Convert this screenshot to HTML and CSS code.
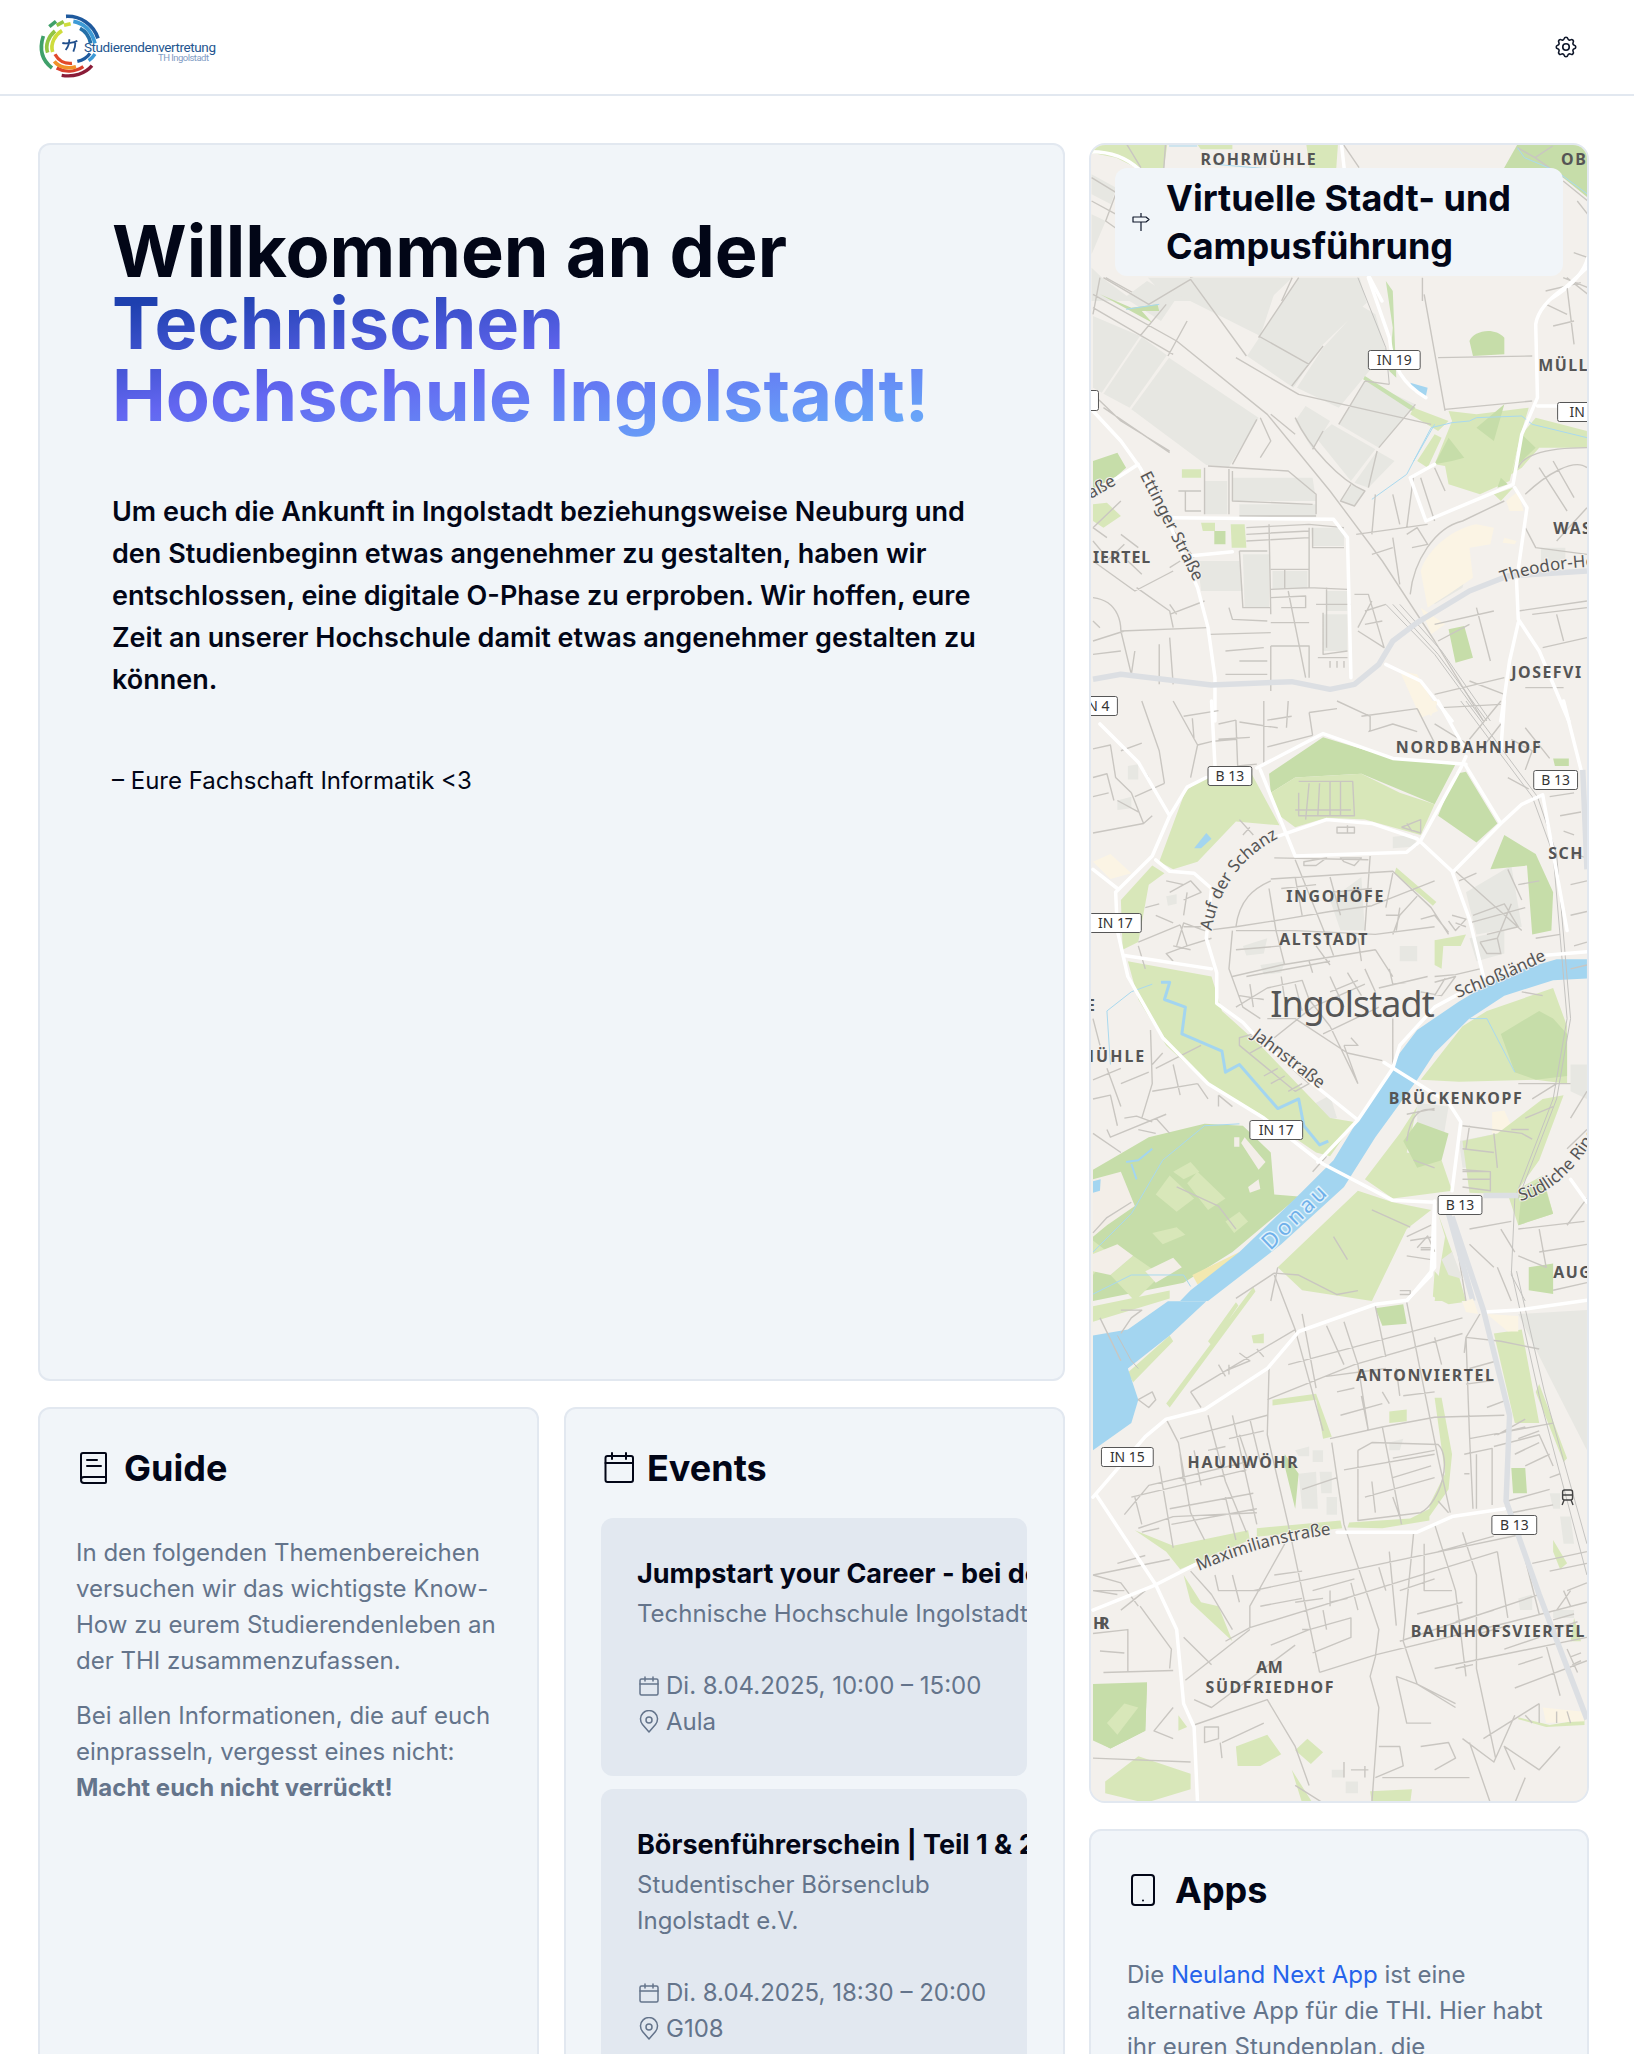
FILE: index.html
```html
<!DOCTYPE html>
<html lang="de">
<head>
<meta charset="utf-8">
<title>O-Phase THI</title>
<link rel="stylesheet" href="styles.css">
</head>
<body>
<header class="topbar">
  <svg class="logo" viewBox="0 0 300 94" role="img" aria-label="Studierendenvertretung TH Ingolstadt">
    <g transform="scale(.3333)" fill="none" stroke-linecap="butt">
      <path d="M198 49C240 47 280 72 294 115" stroke="#1f5a9e" stroke-width="11"/>
      <path d="M220 64C252 70 275 90 285 130" stroke="#3d9ad6" stroke-width="11"/>
      <path d="M240 85C258 94 268 110 272 130" stroke="#2470a8" stroke-width="11"/>
      <path d="M232 184C250 180 262 172 270 160" stroke="#1f5a9e" stroke-width="10"/>
      <path d="M266 182C274 176 280 170 285 162" stroke="#3d9ad6" stroke-width="10"/>
      <path d="M185 226C220 232 255 222 276 197" stroke="#8a1c38" stroke-width="10"/>
      <path d="M170 204C195 218 225 216 250 200" stroke="#d9402e" stroke-width="10"/>
      <path d="M163 184C178 203 205 207 228 200" stroke="#f0922a" stroke-width="11"/>
      <path d="M165 163C175 182 195 192 216 190" stroke="#e24a2a" stroke-width="10"/>
      <path d="M156 204C125 180 118 145 130 108" stroke="#3fa06a" stroke-width="11"/>
      <path d="M143 158C135 135 145 110 165 93" stroke="#93c544" stroke-width="11"/>
      <path d="M158 156C150 130 165 105 186 92" stroke="#cfdc3c" stroke-width="11"/>
      <path d="M148 80L168 64" stroke="#3fa06a" stroke-width="11"/>
      <path d="M170 76L191 65" stroke="#93c544" stroke-width="11"/>
      <path d="M192 76L212 71" stroke="#cfdc3c" stroke-width="11"/>
      <path d="M187 129C200 132 222 128 232 122M208 118C208 132 204 142 197 150M226 128C226 138 224 146 220 155" stroke="#1f4e8c" stroke-width="5.500"/>
    </g>
    <text class="logo-name" x="84" y="52" textLength="132">Studierendenvertretung</text>
    <text class="logo-sub" x="158" y="61" textLength="51">TH Ingolstadt</text>
  </svg>
  <svg class="gear" viewBox="0 0 24 24" fill="none" stroke="currentColor" stroke-width="1.5" stroke-linecap="round" stroke-linejoin="round">
    <path d="M10.325 4.317c.426 -1.756 2.924 -1.756 3.35 0a1.724 1.724 0 0 0 2.573 1.066c1.543 -.94 3.31 .826 2.37 2.37a1.724 1.724 0 0 0 1.065 2.572c1.756 .426 1.756 2.924 0 3.35a1.724 1.724 0 0 0 -1.066 2.573c.94 1.543 -.826 3.31 -2.37 2.37a1.724 1.724 0 0 0 -2.572 1.065c-.426 1.756 -2.924 1.756 -3.35 0a1.724 1.724 0 0 0 -2.573 -1.066c-1.543 .94 -3.31 -.826 -2.37 -2.37a1.724 1.724 0 0 0 -1.065 -2.572c-1.756 -.426 -1.756 -2.924 0 -3.35a1.724 1.724 0 0 0 1.066 -2.573c-.94 -1.543 .826 -3.31 2.37 -2.37c1 .608 2.296 .07 2.572 -1.065z"/>
    <circle cx="12" cy="12" r="3"/>
  </svg>
</header>

<main class="page">
  <div class="left-col">
    <section class="card hero">
      <h1 class="hero-title">Willkommen an der<br><span class="gradient">Technischen<br>Hochschule Ingolstadt!</span></h1>
      <p class="hero-text">Um euch die Ankunft in Ingolstadt beziehungsweise Neuburg und den Studienbeginn etwas angenehmer zu gestalten, haben wir entschlossen, eine digitale O-Phase zu erproben. Wir hoffen, eure Zeit an unserer Hochschule damit etwas angenehmer gestalten zu können.</p>
      <p class="hero-sign">– Eure Fachschaft Informatik &lt;3</p>
    </section>
    <div class="two-col">
      <section class="card panel">
        <h2 class="panel-title">
          <svg class="h-icon" viewBox="0 0 32 32" fill="none" stroke="currentColor" stroke-width="2" stroke-linecap="round" stroke-linejoin="round"><path d="M5 27V3a2 2 0 0 1 2-2h22a1 1 0 0 1 1 1v28a1 1 0 0 1-1 1H8a3 3 0 0 1-3-3 3 3 0 0 1 3-3h22"/><path d="M11 8h10M11 14h14"/></svg>
          Guide
        </h2>
        <p class="copy">In den folgenden Themenbereichen versuchen wir das wichtigste Know-How zu eurem Studierendenleben an der THI zusammenzufassen.</p>
        <p class="copy">Bei allen Informationen, die auf euch einprasseln, vergesst eines nicht: <strong>Macht euch nicht verrückt!</strong></p>
      </section>
      <section class="card panel">
        <h2 class="panel-title panel-title-tight">
          <svg class="h-icon" viewBox="0 0 32 32" fill="none" stroke="currentColor" stroke-width="2" stroke-linecap="round" stroke-linejoin="round"><rect x="3.500" y="4" width="27.500" height="26" rx="2"/><path d="M3.500 11h27.500M10 1v6M24 1v6"/></svg>
          Events
        </h2>
        <div class="events">
          <article class="event">
            <h3 class="event-title">Jumpstart your Career - bei der THI Karrieremesse</h3>
            <p class="event-org">Technische Hochschule Ingolstadt</p>
            <p class="event-meta"><svg class="m-icon" viewBox="0 0 24 24" fill="none" stroke="currentColor" stroke-width="1.5" stroke-linecap="round" stroke-linejoin="round"><rect x="3" y="5" width="18" height="16" rx="1.500"/><path d="M3 10h18M8 3v4M16 3v4"/></svg>Di. 8.04.2025, 10:00 – 15:00</p>
            <p class="event-meta"><svg class="m-icon" viewBox="0 0 24 24" fill="none" stroke="currentColor" stroke-width="1.5" stroke-linecap="round" stroke-linejoin="round"><path d="M12 22l-6.500-7.500A8.500 8.500 0 1 1 18.500 14.500z"/><circle cx="12" cy="10" r="3"/></svg>Aula</p>
          </article>
          <article class="event">
            <h3 class="event-title">Börsenführerschein | Teil 1 &amp; 2</h3>
            <p class="event-org">Studentischer Börsenclub Ingolstadt e.V.</p>
            <p class="event-meta"><svg class="m-icon" viewBox="0 0 24 24" fill="none" stroke="currentColor" stroke-width="1.5" stroke-linecap="round" stroke-linejoin="round"><rect x="3" y="5" width="18" height="16" rx="1.500"/><path d="M3 10h18M8 3v4M16 3v4"/></svg>Di. 8.04.2025, 18:30 – 20:00</p>
            <p class="event-meta"><svg class="m-icon" viewBox="0 0 24 24" fill="none" stroke="currentColor" stroke-width="1.5" stroke-linecap="round" stroke-linejoin="round"><path d="M12 22l-6.500-7.500A8.500 8.500 0 1 1 18.500 14.500z"/><circle cx="12" cy="10" r="3"/></svg>G108</p>
          </article>
        </div>
      </section>
    </div>
  </div>

  <div class="right-col">
    <section class="map-card">
      <svg class="map" viewBox="1090 144 498 1656" preserveAspectRatio="none">
        <rect class="land" x="1080" y="130" width="520" height="1690"/>

        <!-- top strip -->
        <g transform="translate(1080,0) scale(.35336,.33333)">
          <path class="g1" d="M30 430H245L235 505H165L100 470L30 455Z"/>
          <path class="g1" d="M640 430H730L725 505H650Z"/>
          <path class="g2" d="M1200 505L1240 430H1440V590L1370 530L1290 505Z"/>
          <path class="g1" d="M330 430H430V445H340Z"/>
          <path class="ind" d="M30 520L100 560L85 610L30 580ZM30 640L70 660L30 760ZM60 830L150 900H30L30 800ZM190 830H600L530 900H250Z"/>
          <path class="minor" d="M130 430L170 500M240 430L235 505M30 530L100 575M30 600L100 640M100 575L70 660L150 720M70 830L190 900M310 830L530 900M600 830L570 900M970 830V900M1380 830L1440 880M1400 755L1440 770M1370 830L1440 860M1240 440L1290 470L1340 435M1370 540L1440 600M1290 470L1370 530M1320 870L1420 845M745 430L790 500M1410 600L1440 640"/>
          <path class="road" d="M30 452C80 452 130 470 165 505M740 430L748 505M820 830L855 900M1340 890C1400 850 1430 810 1440 770"/>
          <path class="brook" d="M250 435L330 435M380 490L550 505M1240 440L1260 470L1350 510L1440 580"/>
        </g>

        <!-- north -->
        <g transform="translate(1085,260) scale(.35,.33333)">
          <path class="ind" d="M20 165L155 225L45 395L20 380ZM160 228L232 283L125 440L50 398ZM238 290L495 470L410 618L345 612L130 445ZM270 105L295 50H555L500 225ZM462 285L610 50H785L805 125L675 255L595 380ZM680 260L790 135L830 160L860 270L725 440L605 380ZM800 360L945 430L840 560L725 490ZM630 435L700 480L650 565L600 480ZM705 490L830 565L760 660L660 530ZM835 570L885 600L810 680L770 665ZM730 720L765 670L800 690L770 735ZM175 60L260 110L215 180L110 110ZM420 650H650L660 720H420ZM440 730H660V765H440ZM340 660H405V760H340ZM320 900H440L450 990H330ZM450 880H525V1040H455ZM535 930H635V985H535ZM645 800H740V855H650ZM690 990H750V1050H690ZM680 1060H750V1170H680ZM1305 860H1375V905H1305ZM980 950L1060 850L1100 880L1080 980L1000 1030Z"/>
          <path class="yel" d="M960 930C980 860 1060 800 1120 790L1170 800L1160 850L1100 860L1110 950L1040 1000L980 1040ZM1205 720L1240 690L1255 750L1215 750ZM1200 830L1235 840L1230 850L1195 845ZM960 1040L1030 1090L990 1120ZM900 1230L950 1240L1010 1350L960 1370Z"/>
          <path class="g2" d="M1100 240C1110 210 1170 195 1200 230L1200 280L1110 285ZM20 600L90 575L115 620L40 690L20 680ZM368 810H400V850H368ZM1040 1105L1085 1095L1110 1190L1060 1205ZM40 100L130 140L205 130L210 150L160 150L190 185Z"/>
          <path class="g1" d="M1000 610L1050 480L1040 450L1120 460L1270 440L1250 510L1215 660L1130 700L1040 670L1030 615ZM940 440L1040 480L1010 510L930 460ZM950 600L1000 520L1020 530L980 620ZM1290 470L1437 510V560L1300 560L1250 620L1220 640L1250 520ZM20 730L60 725L100 765L50 800L20 780ZM275 625H330V650H275ZM415 790H455L460 860H418ZM330 785H370V810H335ZM1170 700L1225 680L1190 720Z"/>
          <path class="g2" d="M1000 610L1040 530L1085 590L1050 600ZM1120 500L1200 430L1170 540ZM1250 520L1290 560L1240 610ZM1190 650L1210 670L1180 680Z"/>
          <path class="g3" d="M800 345L945 440L935 450L795 355ZM870 330L890 350L880 90L860 60L880 200Z"/>
          <path class="water" d="M930 365L980 380L975 405L940 390Z"/>
          <path class="brook" d="M115 145L210 130M820 715L920 640L990 500L1050 485L1100 480L1120 470L1250 465L1280 490L1437 530M1000 490L940 600"/>
          <path class="minor" d="M20 100L260 240L520 460L700 690L850 900L1000 1140L1140 1380M20 140L250 280M50 440L240 575M430 290L610 400L990 490M20 400L100 480L240 570M490 475L420 610M500 470L530 540L500 590M530 460L600 520M350 615L580 630L660 700L660 760M420 630V720L650 730M440 765H660M640 790L740 800M650 800V860H740M460 800L640 790M460 820L640 810M460 840L640 830M525 790L530 1060M640 800V980L750 985M440 870H520M440 870L450 1040H530M530 925H640V980L530 985M570 925V985M530 1010L630 1005V1040H560M690 980V1160M680 1055V1180L750 1170M665 1190H750M770 1000H810L855 1160L780 1110M410 1040L420 1075L520 1080M530 1085H640M355 1120L530 1115M530 1155H640V1250M530 1155V1290M100 1110L350 1100M20 1140L110 1110M100 1110L130 1240M20 1010C100 1020 100 1100 100 1110M140 990L250 930M20 900L140 990M340 620V760M410 620V760M265 690H330M285 690V750H330M100 820L150 860M20 800L60 830M215 760L310 890M240 1060L340 1020M240 1030L260 1060M145 980L240 1050L250 1100M1010 290L1280 285M970 100L1030 450M1030 445L1280 420M775 820L980 790M830 700L820 820M880 700L900 790M940 640L920 800M960 650L1000 780M1000 620L1030 690M880 830L900 970M820 880L880 860M920 820L950 800L980 850L935 860M930 1000C940 900 1000 800 1080 780L1200 720M1240 620C1250 590 1300 560 1437 560M1260 700C1320 640 1400 590 1437 620M1300 620L1380 750M1340 600L1400 710M1437 740L1350 840M1260 800L1290 860L1437 880M1320 130L1380 160M1340 195L1400 180M1380 80L1400 250M1000 1090L1170 1050M1120 1040L1160 1200M1010 1140L1100 1090M1240 1050L1437 1020M1280 1060L1437 1040M1000 1300L1200 1250M1100 1260L1200 1300M1350 1060L1370 1140M1310 1160L1437 1130M1020 1340L1190 1330M1260 1280L1370 1280M50 50L180 130L300 55M300 55L460 285M40 50L20 160M155 225L230 130M235 285L290 180M610 50L495 230M495 225L640 310M680 255L590 375M870 370L800 360M800 360L725 490M945 430L840 560M835 570L810 680M600 470C640 560 730 660 800 690L770 735L730 720L760 670M650 565L680 510M580 990L630 1250M100 720L20 800M820 1020L780 1100M130 1240L140 1170M20 1180L100 1170M210 1150L210 1270M240 1130L250 1270M400 1170L510 1160M400 1240H520M440 1200L520 1200M660 1030H760M700 1200V1220M720 1200V1220M740 1200V1220M800 1050L860 1030M800 1090L850 1080M60 900L110 850M20 840L60 890M120 900L160 940M40 1100L20 1080M240 920L270 900"/>
          <path class="rail" d="M780 50L860 260L870 370M860 1030L1000 1180L1140 1380M880 1030L1010 1180L1150 1380M900 1030L1020 1170L1160 1380"/>
          <path class="road" d="M810 50L870 230C880 320 910 370 975 410M1437 20L1380 75C1330 110 1295 150 1290 190L1295 410L1250 520L1225 670M1295 435H1350M1225 670L975 780L930 650L1000 610M20 450L100 540L155 620L240 790L320 980L350 1100L370 1250V1380M20 690L90 650L150 610M240 770L710 775L750 830L760 1250M295 885L420 872M1230 680L1265 740L1235 960L1240 1075L1300 1170L1385 1380M1240 1085L1215 1200L1190 1380M860 1210L960 1260L1050 1380"/>
          <path class="motor" d="M20 1255L100 1240L360 1272L590 1262L700 1285L770 1270L840 1210L880 1140L950 1085L1100 990L1210 945L1437 930"/>
        </g>

        <!-- centre -->
        <g transform="translate(1085,700) scale(.35,.38265)">
          <path class="ind" d="M90 260L130 250L130 280L90 285ZM120 170L150 165L150 205L120 205ZM230 510L260 505L260 530L235 535ZM880 355L940 350L950 380L880 385ZM450 640L520 620L510 660L460 665ZM900 640L950 640L950 680L900 680ZM700 520L790 460L800 600L730 600ZM1090 500L1220 430L1250 590L1120 610ZM1100 620L1200 600L1200 660L1120 680ZM500 690L570 680L560 710L510 715ZM640 1060L700 1030L720 1090L660 1100ZM950 1050L1040 1060L1020 1170L950 1180ZM1070 1150L1180 1130L1170 1220L1080 1220ZM1390 950H1437V1040L1390 1020Z"/>
          <path class="yel" d="M20 420L70 400L130 450L70 465ZM950 0L1010 0L990 40ZM1165 1075L1200 1070L1230 1130L1165 1130Z"/>
          <path class="g2" d="M525 190L680 95L880 150L1060 165L1000 270L790 190L600 200L530 240ZM1060 190L1090 185L1180 320L1120 370L1010 300ZM1200 350L1290 400L1340 500L1335 600L1280 610L1265 430L1160 440ZM1340 150H1385V170H1345Z"/>
          <path class="g1" d="M530 240L600 200L790 190L900 240L1000 270L960 350L800 310L690 305L600 330L555 300ZM210 420L285 235L340 200L475 190L555 325L430 315L320 420L250 440ZM100 520L190 430L225 450L180 480L150 630L105 650ZM890 435L1005 525L995 535L885 450ZM1000 625L1090 610L1075 640L1025 640L1020 700L1000 690ZM120 680L360 720L390 810L500 900L700 1090L770 1100L700 1190L660 1180L500 1080L350 1000L230 900L150 780ZM1150 810L1340 750L1380 850L1380 1000L1290 990L1070 995L960 990L1080 850ZM1180 1130L1310 1040L1370 1030L1300 1200L1230 1290L1100 1285L1080 1150ZM550 1480L780 1280L880 1310L990 1330L920 1380L820 1568L620 1540ZM900 1130L950 1060L920 1180L1020 1200L1050 1280L880 1300L800 1250ZM1010 1340L1030 1400L1000 1568L1090 1568L1050 1440ZM1210 1290L1310 1240L1340 1340L1240 1370Z"/>
          <path class="g2" d="M1190 870L1300 810L1340 830L1380 870L1380 980L1290 990L1230 970ZM910 1150L950 1100L1040 1130L1020 1200L950 1220ZM1250 1280L1310 1250L1340 1340L1240 1370ZM1270 1480L1340 1470L1340 1550L1270 1540ZM20 1225L180 1140L340 1105L450 1110L530 1180L540 1290L610 1295L420 1440L280 1520L20 1568Z"/>
          <path class="g1" d="M200 1290L240 1240L310 1300L260 1335ZM290 1260L320 1230L400 1300L350 1330ZM190 1390L260 1375L285 1395L220 1420ZM400 1360L440 1335L465 1360L425 1390ZM250 1230L300 1205L325 1230L280 1250ZM70 1500L135 1450L215 1500L140 1568ZM20 1410L70 1445L20 1500Z"/>
          <path class="plain" d="M20 1250L100 1230L140 1320L60 1370L20 1400ZM445 1155L455 1140L515 1205L495 1225ZM425 1140H440V1165H425ZM465 1270L495 1250L500 1275L470 1285ZM20 1445L90 1420L135 1450L70 1500L20 1490ZM170 1490L250 1455L275 1480L200 1520Z"/>
          <path class="sand" d="M305 1500L440 1440L445 1450L400 1480L320 1525Z"/>
          <path class="water" d="M1437 675L1350 675L1200 715L1070 785L950 860L900 920L870 975L810 1050L710 1200L600 1300L440 1440L300 1540L270 1568H350L560 1420L740 1270L830 1140L950 990L1000 920L1100 830L1200 770L1340 730L1437 725Z"/>
          <path class="canal" d="M215 735H240L225 780L285 800L275 870L390 915L400 970L440 950L550 1065L610 1040L625 1110L670 1160L695 1150"/>
          <path class="canal thin" d="M115 1205L150 1200L190 1170M130 1210L145 1250"/>
          <path class="water" d="M310 385L345 345L360 360L330 385ZM20 1255L42 1250L40 1280L20 1285Z"/>
          <path class="brook" d="M190 740L130 760L60 810L70 950M1100 830L1150 830L1230 970M20 1440L130 1340L220 1200L340 1110L440 1105M20 1550L130 1500L280 1500L300 1530"/>
          <path class="minor" d="M20 125L70 115L85 200M20 345L165 320L130 240M165 320L190 300M160 0L210 130L225 215M250 0L320 115L365 105M280 40L380 25M310 100L305 45M430 50L435 170M510 0V165M380 100L470 95M440 55L550 70M580 0L575 70M520 120L650 90M720 0L815 40V80M790 40L950 20M640 30L720 20M1190 0L1100 100M430 590L570 570L700 550L820 535L1000 470M430 600H600L830 610L1000 590M340 600L430 590M420 720L560 690L830 650M460 720L700 680M525 490L545 600L570 690M600 415L700 640L710 665M815 405L800 600M530 465L880 445L990 540L1040 610M430 590C440 520 480 490 530 470M960 570L1000 560L1040 605M900 540L890 600M540 410L810 415M420 600L410 700L450 800L500 830M430 800L520 750L620 730L640 780L700 850L780 1000M520 830H600L750 920L850 940M540 880L650 800L800 740M680 870L840 800M870 700L880 740L920 735M840 750L980 720M1000 720L1060 715L1130 700M880 830V950M740 900L780 1000M760 880L780 900L740 900M1060 445L1250 600M1070 470L1120 450M1100 580L1260 540M1130 630L1180 620L1220 530M1180 620L1190 660H1150L1130 630M1390 560L1437 550M150 630L270 585M270 585L290 640M240 500L300 470L330 500L280 520M360 620L290 640L230 660L250 680M20 1040L70 1030L90 1110M185 860L190 1000L160 1090M200 960L330 900M190 1020L320 1000M60 1120L70 1140L230 1080M110 1090L145 1085L190 1100M20 1130L100 1180M920 1080L1000 1065M920 1150C930 1080 960 1060 1000 1070M1080 1110L1250 1130L1280 1145M940 1200L1000 1220M1080 1270L1160 1280V1230L1080 1225M920 1400L990 1370M20 1390L60 1350L130 1310M1100 1380L1220 1360M1240 1380L1430 1360M1300 1380L1320 1480L1240 1450M1060 1400L1090 1568M1240 1000L1390 1000M1380 1370L1437 1300M1180 1480L1220 1568M530 1568L550 1480M820 1330L930 1375M430 1380L380 1320L260 1270M710 1400L750 1460M380 1030V1060M650 1230L690 1190M260 640L280 580L340 600M610 240V300H770L765 210H610M640 215L630 310M670 215L665 300M700 210V300M730 210V300M600 285H760M720 330H770V345H720ZM750 325V345M905 330L960 310V345L905 330M920 320L935 340M440 310L480 350M470 330L450 350M440 880L480 870L640 1000L600 1020L440 900ZM470 880L500 860M510 900L470 920M550 960L510 980M570 980L530 1000M620 1000L580 1020M625 420L690 410L660 430H625ZM730 410H790L770 430L740 420ZM1000 735L1060 720L1020 770L960 760M1030 725L1000 770M1110 560L1200 530L1240 590L1150 610M1050 560L1090 570L1060 600L1040 575M1060 580L1090 590M1080 1230H1160M1080 1250H1160M20 200L60 190L80 260M20 250L65 240M85 200L130 240M100 130L160 110M150 160L180 200M225 215L140 250M90 260L150 290M320 115L300 200M365 105L430 100M435 170L490 165M380 60L430 50M520 50L590 40M650 90L640 30M810 80L880 60L950 80M950 20L1000 110M1000 60L1090 110M1130 130L1190 60M1220 100L1280 130L1260 180M1260 70L1330 150M1210 200L1270 230M1330 250L1400 240M1360 300L1420 290M1370 340L1400 350M1400 400L1437 410M1390 480L1437 470M600 460L620 560M700 460L730 560M880 450L860 540M560 490L660 480M700 500L820 490M950 510L900 560M860 560H900L880 610M430 650L560 640M660 640L700 690M780 620L790 680M830 650L880 720M640 680L650 710M560 720L570 780M600 740L620 810M470 740L480 800M440 770L510 780M700 720L740 800M750 710L790 770M800 700L830 760M700 760L780 730M150 640L170 700M200 560L250 580M170 540L210 530M280 590H330M250 640L300 650M230 470L280 480M290 500L280 560M20 830L40 900M20 990L100 960M60 960L100 1060M100 1000L180 970M220 920L190 950M250 950L270 1030M320 1000L350 1040M150 1120L200 1130M200 1090L240 1130M380 1030L420 1060M1250 760L1310 770M1400 640L1437 630M1390 700L1437 690M1240 480L1300 470M1210 440L1250 520M1290 620L1360 610M1100 1110L1090 1170M1080 1170L1170 1180M1170 1130L1180 1220M1220 1120H1270M1260 1090L1340 1060M1280 1040L1350 1000M1390 1090L1437 1020M1380 1170L1437 1120M930 1410L1000 1400M920 1450L990 1460M1100 1420L1170 1480M1190 1380L1230 1440M1300 1440L1437 1420M1340 1540L1437 1520"/>
          <path class="rail" d="M1075 0L1280 250L1340 400L1380 830L1340 1040L1230 1300L1220 1500L1260 1568M1090 0L1295 250L1350 400L1390 830L1350 1040L1240 1300"/>
          <path class="road" d="M85 500L190 405L240 300L290 225L345 200M490 175L680 85L880 150L1090 165M500 180L600 405L920 395L960 365L1075 175L1090 145M545 355L690 310L820 320L950 360L1050 445L1100 570L1140 720M1090 170L1190 320L1055 445M1190 320L1250 270L1310 245L1380 600M85 500L90 600L120 720L220 880L350 1000L510 1090L680 1210L880 1305L1000 1310M200 415L240 445L310 450L360 490L345 620L375 710V790L450 840L500 890L780 1095L665 1205M110 665L360 700M855 945L1040 1050L1075 1100L1050 1280M780 1095L880 960L900 900L1000 800L1100 750L1310 665L1437 655M1000 1320V1480L920 1568M360 0L370 170M1010 0L1090 130M20 440L90 490M40 60L150 160L240 300M1200 0L1190 130M1370 0L1420 180M1390 1250L1437 1310"/>
          <path class="motor" d="M1425 180L1437 440M1040 1340L1110 1568M1140 1292H1240"/>
        </g>

        <!-- south -->
        <g transform="translate(1085,1200) scale(.35,.38961)">
          <path class="ind" d="M1240 290L1437 280V640L1340 470ZM600 640L640 630V655H610ZM650 640H680V670H650ZM610 700L660 695L665 790L620 790ZM670 695H705V750H675ZM690 760H720V805H690ZM870 620L910 610L900 640H870ZM1330 750H1360V790H1340ZM1360 810H1390L1400 880H1370ZM1240 1020L1280 1010V1050H1245ZM1340 1050H1400V1070H1340ZM705 1460H740V1480H705ZM745 1490H780V1520H745ZM1020 150L1050 130L1080 200L1040 190Z"/>
          <path class="g2" d="M830 275L910 265L920 315L850 320ZM20 1240L175 1235L170 1360L70 1405L20 1380ZM570 650L610 700L600 790L570 680ZM1220 685H1260L1265 750H1225Z"/>
          <path class="g1" d="M1170 340L1250 330L1300 570H1230ZM535 510L660 495L705 605L680 610L660 510L535 525ZM870 540L920 535V565L870 570ZM1000 505H1020L1050 650L1040 740L985 810V780L1030 700ZM755 825L930 815L985 790V820L850 840L750 838ZM490 840L730 820L735 840L490 862ZM140 845L250 885L465 845L470 870L270 945L230 900ZM280 960L330 1030L380 1040L420 1130L300 1030ZM430 1400L520 1370L560 1420L500 1450H435ZM600 1410L635 1380L680 1415L645 1445ZM55 1490L150 1425L300 1470V1510L170 1545L55 1520ZM815 1515L935 1510L930 1545H820ZM1000 180L1080 260L1040 265L995 245ZM1340 870L1380 930L1360 945L1340 900ZM475 345L510 340V365H480ZM265 1320L290 1350L265 1360ZM1240 1325L1330 1345L1430 1330V1345L1320 1350L1240 1330ZM350 360L430 260L437 268L360 370ZM230 520L480 220L486 232L240 530ZM120 440L240 345L250 360L135 465ZM20 270L240 230V250L20 310ZM1300 470L1380 660L1370 670L1290 490ZM1400 1070L1420 1130H1390ZM590 1460L650 1545H620Z"/>
          <path class="g2" d="M20 1245L175 1240L170 1360L70 1405L20 1385Z"/>
          <path class="g1" d="M60 1340L110 1290L150 1300L90 1370Z"/>
          <path class="yel" d="M1080 260L1110 250L1125 290L1090 285ZM1150 290L1240 295V335H1210ZM1310 1300L1420 1310L1430 1335L1320 1340Z"/>
          <path class="water" d="M235 257L120 330L20 345V640L130 570L150 510L120 430L240 345L345 257Z"/>
          <path class="minor" d="M300 490L430 420L600 330M380 420L400 450M300 490L330 530M540 190L600 330L680 590M620 290L660 480M690 320L740 420M740 310L780 420L810 590M830 270L860 400M920 260L960 440L1010 660L1045 800M1130 290L1090 350L1100 600L1110 790M525 430L520 600L580 830L620 1000L670 1210M580 420L790 370L1080 300M520 510L770 420L1080 340M690 450L860 430M720 490L770 480M350 550L400 720L460 850M420 550L490 830M230 560L265 620L300 800L340 870M210 680L250 890M110 805L180 730L460 670M270 610L520 550M130 760L460 690M240 790L480 750M245 830L490 790M150 840L250 810L490 800M400 760L430 870M700 610L850 580L1000 555L1200 550M850 580L905 830M780 640L820 620L1010 625C1050 660 1020 770 960 800L780 820V640M740 690L1000 650M800 760L1000 710M705 620L740 830L840 1100L830 1170M1100 610L1340 570M1000 830L1060 1000L1090 1220M1080 850L1120 960V1200L1175 1430M940 850L910 1130L950 1240L1060 1290M970 880V1000H1050M480 1000L1280 850M470 1095L1180 900M400 1130L470 1095V1040L520 960L570 880M370 960L380 1000H500M280 1120L360 1190M285 1230L470 1100M640 1100L760 1070V1120L650 1160M670 1210L830 1165L1220 1080L1437 1030M900 1130L1300 1010M1000 1200L1437 1120M1230 1250L1437 1180M20 1110L120 1100V1210M40 1155L110 1160M50 1210L250 1205M155 1040L245 1150L240 1200M20 960L100 980L150 1040M90 930L170 910M250 1300L195 1360L250 1380M310 1280L360 1300L600 1140M310 1345L520 1280L600 1400L640 1500M390 1390L510 1340M830 1170L815 1220L840 1300L820 1545M890 1220L920 1340H990M890 1220L950 1240L1060 1300M960 1400L1040 1390L1060 1430L1000 1460M1080 1380L1170 1440L1230 1320M1140 1380L1300 1290M1100 1390L1160 1545M1230 1460L1200 1400L1300 1460L1360 1400M1260 1480L1230 1545M20 1430L300 1440M840 1400H900L910 1450L830 1480M850 1480H1100M1085 650L1165 635V780M1085 700H1100M1120 650V790M650 1000L770 970M600 1030L680 1020M700 1030L750 1020M620 1100H640M700 1000V1040M760 1460H810M740 1440V1480M800 1450V1480M340 1350V1390L380 1380V1350ZM390 1430L385 1390M1350 1050L1390 1000M1370 1000L1390 1040M1340 1075L1400 1060M1340 1100L1410 1080M1380 1150L1410 1210M1390 1170L1420 1160M1395 1190L1420 1180M1260 1320L1280 1340M1300 1290V1340M1350 1310V1340M1380 1310L1390 1340M600 1500L680 1545M240 920L20 960M620 740L720 710M1010 770L1040 800M1170 630L1300 600L1340 680M1170 600L1260 580M1230 650L1300 620M1210 770L1330 740M1300 380L1190 360L1090 350L1085 390M440 390L470 410L390 440M410 420V445M490 380L510 400M150 510L180 530L200 510L190 490ZM40 300L100 410M100 280H160L130 300L100 340M950 120L980 90L1000 130M780 230L720 240L610 190L540 185L430 250M900 240H930V230H900M960 120H990V125H960M20 1000H110M20 1000L90 1010M100 1050L170 1000M160 850L210 840M270 650L280 720M310 640L330 730M350 640L400 630M440 600L470 680M470 560L500 670M410 610L510 590M140 760L160 830M300 950L360 1010M360 1010L420 1100M420 960L440 1030M540 960L620 950M500 1040L620 1020M530 1140L640 1100M680 1050L690 1100M760 980L780 1050M870 900L890 1090M900 1000L1000 970M860 1000L840 940M1010 900L1170 860M1060 1080L1170 1050M1130 1110L1210 1090M1180 900L1210 1070M1240 850L1300 1060M1280 930L1437 900M1330 950L1437 930M1380 1000L1437 980M1200 1150L1300 1120M1240 1190L1310 1170M1320 1140L1360 1270M1060 1200L1110 1190M950 1060L1080 1030M1180 600L1260 560M1100 430L1180 410M1000 350L1020 420M1090 470L1170 460M1150 530L1210 510M1240 610L1300 590M1260 680L1330 650M1330 710L1360 700M1220 800L1340 780M890 430L900 500M850 490L870 520M730 550L850 520M790 500L810 590M910 500L1000 490M880 660L1000 640M880 710L990 680M820 720L830 800M880 760L900 810"/>
          <path class="rail" d="M1220 180L1300 500L1437 960M1235 180L1315 490L1437 880M90 345L130 410L150 430"/>
          <path class="road" d="M20 760L170 605L230 560L340 535L520 430L610 335L830 265L920 255L990 190L1000 0M1145 285L1240 280L1437 255M30 755L200 985L260 1100L280 1290L310 1350L320 1545M20 1050L200 985L320 930M720 850H950L1050 810L1200 790"/>
          <path class="motor" d="M1050 40L1140 280L1215 550L1205 770L1300 1010L1437 1330"/>
        </g>

        <!-- street names -->
        <defs>
          <path id="p-schloss" d="M1458 997Q1505 980 1555 955"/>
          <path id="p-jahn" d="M1251 1036L1330 1096"/>
          <path id="p-schanz" d="M1211 930Q1222 865 1280 836"/>
          <path id="p-donau" d="M1270 1250L1340 1182"/>
          <path id="p-sud" d="M1521 1200Q1565 1190 1600 1130"/>
          <path id="p-ett" d="M1139 474L1196 586"/>
          <path id="p-theo" d="M1503 582Q1550 565 1620 565"/>
          <path id="p-max" d="M1198 1570Q1270 1540 1336 1533"/>
        </defs>
        <text class="street"><textPath href="#p-schloss">Schloßlände</textPath></text>
        <text class="street"><textPath href="#p-jahn">Jahnstraße</textPath></text>
        <text class="street"><textPath href="#p-schanz">Auf der Schanz</textPath></text>
        <text class="street river"><textPath href="#p-donau">Donau</textPath></text>
        <text class="street"><textPath href="#p-sud">Südliche Ring</textPath></text>
        <text class="street"><textPath href="#p-ett">Ettinger Straße</textPath></text>
        <text class="street"><textPath href="#p-theo">Theodor-Heuss-Ring</textPath></text>
        <text class="street"><textPath href="#p-max">Maximilianstraße</textPath></text>
        <text class="street" transform="translate(1090 498) rotate(-30)">aße</text>

        <!-- districts -->
        <text class="dist" x="1200" y="164" textLength="117">ROHRMÜHLE</text>
        <text class="dist" x="1562" y="164">OB</text>
        <text class="dist" x="1539" y="370">MÜLL</text>
        <text class="dist" x="1554" y="533">WAS</text>
        <text class="dist" x="1092" y="562" textLength="59">IERTEL</text>
        <text class="dist" x="1512" y="677">JOSEFVI</text>
        <text class="dist" x="1396" y="752" textLength="147">NORDBAHNHOF</text>
        <text class="dist" x="1549" y="858">SCH</text>
        <text class="dist" x="1286" y="901" textLength="99">INGOHÖFE</text>
        <text class="dist" x="1279" y="944" textLength="90">ALTSTADT</text>
        <text class="dist" x="1085" y="1010">E</text>
        <text class="dist" x="1078" y="1061" textLength="67">MÜHLE</text>
        <text class="dist" x="1389" y="1103" textLength="135">BRÜCKENKOPF</text>
        <text class="dist" x="1554" y="1277">AUG</text>
        <text class="dist" x="1356" y="1380" textLength="140">ANTONVIERTEL</text>
        <text class="dist" x="1187" y="1467" textLength="112">HAUNWÖHR</text>
        <text class="dist" x="1092" y="1628" textLength="18">HR</text>
        <text class="dist" x="1411" y="1636" textLength="176">BAHNHOFSVIERTEL</text>
        <text class="dist" x="1256" y="1672" textLength="28">AM</text>
        <text class="dist" x="1205" y="1692" textLength="130">SÜDFRIEDHOF</text>
        <text class="city" x="1270" y="1016" textLength="165">Ingolstadt</text>

        <!-- shields -->
        <rect class="shield" x="1368.500" y="349.500" width="52" height="19" rx="2"/><text class="shield-t" x="1394.500" y="364">IN 19</text>
        <rect class="shield" x="1558.500" y="401.500" width="50" height="19" rx="2"/><text class="shield-t" x="1584" y="416">IN 8</text>
        <rect class="shield" x="1070.500" y="389.500" width="27" height="20" rx="2"/>
        <rect class="shield" x="1074.500" y="695.500" width="42" height="19" rx="2"/><text class="shield-t" x="1095" y="710">IN 4</text>
        <rect class="shield" x="1207.500" y="765.500" width="44" height="19" rx="2"/><text class="shield-t" x="1229.500" y="780">B 13</text>
        <rect class="shield" x="1534.500" y="769.500" width="44" height="19" rx="2"/><text class="shield-t" x="1556.500" y="784">B 13</text>
        <rect class="shield" x="1088.500" y="912.500" width="52" height="19" rx="2"/><text class="shield-t" x="1114.500" y="927">IN 17</text>
        <rect class="shield" x="1249.500" y="1119.500" width="53" height="19" rx="2"/><text class="shield-t" x="1276" y="1134">IN 17</text>
        <rect class="shield" x="1438.500" y="1194.500" width="44" height="19" rx="2"/><text class="shield-t" x="1460.500" y="1209">B 13</text>
        <rect class="shield" x="1100.500" y="1446.500" width="52" height="19" rx="2"/><text class="shield-t" x="1126.500" y="1461">IN 15</text>
        <rect class="shield" x="1492.500" y="1514.500" width="45" height="19" rx="2"/><text class="shield-t" x="1515" y="1529">B 13</text>

        <g class="train"><rect x="1563.500" y="1489" width="10" height="10" rx="2"/><path d="M1563.500 1494H1573.500M1565 1499L1563 1504M1572 1499L1574 1504"/></g>
      </svg>
      <div class="map-title">
        <svg class="sign" viewBox="0 0 18 18" fill="none" stroke="currentColor" stroke-width="1.2" stroke-linejoin="round"><path d="M9 0v18"/><path d="M1 4h13l3 2.500-3 2.500H1z" fill="#f1f5f9"/></svg>
        <h2 class="map-heading">Virtuelle Stadt- und Campusführung</h2>
      </div>
    </section>

    <section class="card panel">
      <h2 class="panel-title">
        <svg class="h-icon" viewBox="0 0 32 32" fill="none" stroke="currentColor" stroke-width="2" stroke-linecap="round" stroke-linejoin="round"><rect x="5" y="1" width="22" height="30" rx="3"/><path d="M16 26.500v.01"/></svg>
        Apps
      </h2>
      <p class="copy">Die <a class="link" href="#">Neuland Next App</a> ist eine alternative App für die THI. Hier habt ihr euren Stundenplan, die</p>
    </section>
  </div>
</main>
</body>
</html>
```

FILE: styles.css
```css
* { box-sizing: border-box; }
html, body { margin: 0; height: 2054px; overflow: hidden; background: #fff; }
body { font-family: Inter, "Liberation Sans", sans-serif; color: #020617; }

.topbar {
  height: 96px;
  border-bottom: 2px solid #e2e8f0;
  display: flex;
  align-items: center;
  justify-content: space-between;
  padding-right: 55px;
}
.logo { width: 300px; height: 94px; display: block; }
.logo-name { font: 400 13.500px Roboto, sans-serif; fill: #23558f; }
.logo-sub { font: 400 9.500px Roboto, sans-serif; fill: #7f9cc4; }
.gear { width: 26px; height: 26px; color: #0f172a; }

.page {
  display: grid;
  grid-template-columns: 1027px 500px;
  column-gap: 24px;
  padding: 47px 0 0 38px;
  align-items: start;
}
.left-col, .right-col { display: flex; flex-direction: column; gap: 26px; }

.card {
  background: #f1f5f9;
  border: 2px solid #e2e8f0;
  border-radius: 12px;
}
.hero { height: 1238px; padding: 70px 72px; }
.hero-title { margin: 0; font-size: 72px; line-height: 72px; font-weight: 700; }
.gradient {
  display: inline-block;
  padding-bottom: 14px;
  margin-bottom: -14px;
  background: linear-gradient(172.4deg, #1e40af 7.3%, #6366f1 48%, #68a4f8 88.6%);
  -webkit-background-clip: text;
  background-clip: text;
  color: transparent;
}
.hero-text { margin: 60px 0 0; font-size: 27px; line-height: 42px; font-weight: 600; width: 880px; }
.hero-sign { margin: 62px 0 0; font-size: 24px; line-height: 36px; font-weight: 400; }

.two-col { display: grid; grid-template-columns: 501px 501px; column-gap: 25px; }
.panel { padding: 36px 36px 36px; min-height: 900px; }
.panel-title {
  margin: 0 0 44px;
  display: flex;
  align-items: center;
  gap: 16px;
  font-size: 36px;
  line-height: 46px;
  font-weight: 700;
}
.panel-title-tight { gap: 13px; }
.h-icon { width: 32px; height: 32px; flex: none; }
.copy { margin: 0 0 19px; font-size: 24px; line-height: 36px; color: #64748b; }
.copy strong { font-weight: 700; }
.link { color: #2563eb; text-decoration: none; }

.events { display: flex; flex-direction: column; gap: 13px; margin: -17px 0 0 -1px; width: 426px; }
.event { background: #e2e8f0; border-radius: 12px; padding: 38px 36px 36px; overflow: hidden; }
.event-title { margin: 0 0 4px; font-size: 27px; line-height: 36px; font-weight: 700; white-space: nowrap; }
.event-org { margin: 0 0 36px; font-size: 24px; line-height: 36px; color: #64748b; width: 410px; }
.event-meta { margin: 0; font-size: 24px; line-height: 36px; color: #64748b; display: flex; align-items: center; gap: 5px; white-space: nowrap; }
.m-icon { width: 24px; height: 24px; flex: none; }

.map-card {
  position: relative;
  height: 1660px;
  background: #f3f0ec;
  border: 2px solid #e2e8f0;
  border-radius: 16px;
  overflow: hidden;
}
.map { display: block; width: 100%; height: 100%; }
.map path { vector-effect: non-scaling-stroke; }
.map-title {
  position: absolute;
  left: 24px;
  top: 23px;
  width: 448px;
  height: 108px;
  padding: 6px 12px 6px 17px;
  display: flex;
  align-items: center;
  gap: 16px;
  background: #f1f5f9;
  border-radius: 12px;
}
.sign { width: 18px; height: 18px; flex: none; color: #0f172a; }
.map-heading { margin: 0; font-size: 36px; line-height: 48px; font-weight: 700; }

.land { fill: #f3f0ec; }
.ind { fill: #e7e7e2; }
.yel { fill: #fbf4e4; }
.g1 { fill: #d8e7b9; }
.g2 { fill: #c6dda9; }
.g3 { fill: #c8e0b0; }
.plain { fill: #f3eee8; }
.sand { fill: #f2e8b0; }
.water { fill: #a3d5f0; }
.canal { fill: none; stroke: #a3d5f0; stroke-width: 3px; stroke-linejoin: round; }
.canal.thin { stroke-width: 2px; }
.brook { fill: none; stroke: #a9d9ef; stroke-width: 1px; }
.minor { fill: none; stroke: #c9c6c1; stroke-width: 1.400px; stroke-linejoin: round; }
.rail { fill: none; stroke: #c4c3c0; stroke-width: 1px; }
.road { fill: none; stroke: #fff; stroke-width: 3.500px; stroke-linejoin: round; stroke-linecap: round; }
.motor { fill: none; stroke: #dcdfe3; stroke-width: 5.500px; stroke-linejoin: round; }

.dist { font: 700 16px "Noto Sans", sans-serif; letter-spacing: 1.500px; fill: #555; }
.city { font: 400 36px "Noto Sans", sans-serif; fill: #555; }
.street { font: 400 17px "Noto Sans", sans-serif; fill: #555; stroke: #f3f0ec; stroke-width: 2px; paint-order: stroke; }
.street.river { font-size: 22px; letter-spacing: 3px; fill: #6fb0ea; stroke: #dff1fb; stroke-width: 3px; }
.shield { fill: #fff; stroke: #555; stroke-width: 1px; }
.shield-t { font: 400 14px "Noto Sans", sans-serif; fill: #333; text-anchor: middle; }
.train rect, .train path { fill: none; stroke: #444; stroke-width: 1.400px; }
```
